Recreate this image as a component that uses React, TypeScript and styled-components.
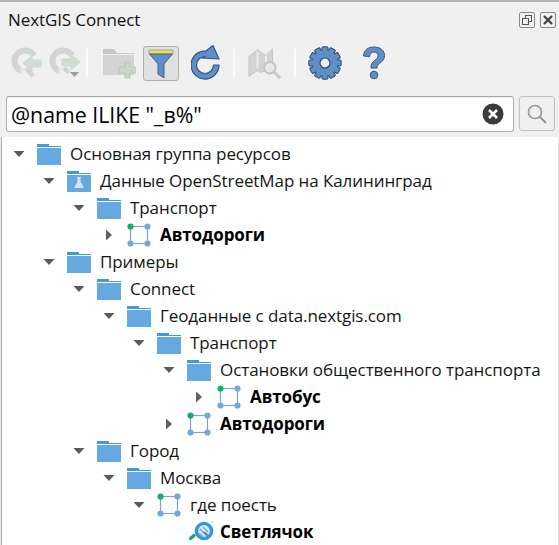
import { FC } from 'react'
import styled, { createGlobalStyle } from 'styled-components'

const GlobalStyle = createGlobalStyle`
  html, body { margin: 0; padding: 0; background: #f0f0f0; }
  body { font-family: "Open Sans", "Noto Sans", sans-serif; color: #000; }
`

const Panel = styled.div`
  width: 559px;
  height: 545px;
  overflow: hidden;
  display: flex;
  flex-direction: column;
  background: #f0f0f0;
  border-top: 2px solid #b4b4b4;
  box-sizing: border-box;
`

const TitleBar = styled.div`
  height: 36px;
  flex: none;
  display: flex;
  align-items: center;
  padding: 0 3px 0 8px;
  box-sizing: border-box;
`

const Title = styled.span`
  flex: 1;
  margin-bottom: 2px;
  font-size: 17px;
  letter-spacing: -0.1px;
  color: #101010;
`

const WindowButton = styled.button`
  width: 16px;
  height: 16px;
  margin-left: 5px;
  padding: 0;
  border: 1px solid #8a8a8a;
  border-radius: 2px;
  background: #f0f0f0;
  display: flex;
  align-items: center;
  justify-content: center;
`

const Toolbar = styled.div`
  height: 42px;
  flex: none;
  margin-top: 4px;
  padding-left: 8px;
  display: flex;
  align-items: center;
`

const ToolButton = styled.button<{ $w?: number; $gap?: number; $active?: boolean }>`
  width: ${(p) => p.$w ?? 36}px;
  height: 35px;
  margin-left: ${(p) => p.$gap ?? 0}px;
  padding: 0;
  flex: none;
  display: flex;
  align-items: center;
  justify-content: center;
  border-radius: 3px;
  box-sizing: border-box;
  border: 1px solid ${(p) => (p.$active ? '#adadad' : 'transparent')};
  background: ${(p) => (p.$active ? '#e0e0e0' : 'transparent')};
`

const ToolSep = styled.div<{ $before: number; $after: number }>`
  width: 2px;
  height: 28px;
  flex: none;
  margin: 0 ${(p) => p.$after}px 0 ${(p) => p.$before}px;
  background: #fbfbfb;
`

const SearchRow = styled.div`
  flex: none;
  margin-top: 12px;
  padding: 0 4px 0 6px;
  display: flex;
  gap: 5px;
`

const SearchBox = styled.div`
  flex: 1;
  height: 36px;
  box-sizing: border-box;
  display: flex;
  align-items: center;
  padding: 0 9px 0 4px;
  background: #fff;
  border: 1px solid #b0b0b0;
  border-top-color: #a8a8a8;
  border-radius: 3px;
  box-shadow: inset 0 1px 0 #ececec;
`

const SearchText = styled.span`
  flex: 1;
  font-size: 21.3px;
  white-space: pre;
`

const SearchButton = styled.button`
  width: 36px;
  height: 35px;
  padding: 0;
  box-sizing: border-box;
  border: 1px solid #c0c0c0;
  border-radius: 3px;
  background: #f0f0f0;
  display: flex;
  align-items: center;
  justify-content: center;
`

const Tree = styled.div`
  flex: 1;
  margin: 5px 0 0 1px;
  padding-top: 3px;
  background: #fff;
  border-left: 1px solid #a8a8a8;
  border-right: 1px solid #e4e4e4;
`

const Row = styled.div<{ $level: number }>`
  height: 27px;
  display: flex;
  align-items: center;
  padding-left: ${(p) => 9 + p.$level * 30}px;
  white-space: nowrap;
`

const Arrow = styled.span`
  width: 16px;
  height: 16px;
  flex: none;
  margin-right: 10px;
  display: flex;
  align-items: center;
  justify-content: center;
`

const ItemIcon = styled.span`
  width: 24px;
  height: 24px;
  flex: none;
  margin-right: 9px;
  display: block;
`

const Label = styled.span<{ $bold?: boolean }>`
  font-size: 17px;
  letter-spacing: -0.08px;
  font-weight: ${(p) => (p.$bold ? 700 : 400)};
  color: ${(p) => (p.$bold ? '#000' : '#151515')};
`

const ArrowIcon: FC<{ open: boolean }> = ({ open }) => (
  <svg width="16" height="16" viewBox="0 0 16 16">
    {open ? <path d="M2.5 5h11L8 11z" fill="#5a5a5a" /> : <path d="M5 2.5v11L11 8z" fill="#5f5f5f" />}
  </svg>
)

const Folder: FC = () => (
  <svg width="24" height="24" viewBox="0 0 24 24">
    <path d="M0 2h12v2h12v1H0z" fill="#3f9ade" />
    <rect x="0" y="6" width="24" height="17" fill="#66a9e0" />
  </svg>
)

const DataFolder: FC = () => (
  <svg width="24" height="24" viewBox="0 0 24 24">
    <path d="M0 2h12v2h12v1H0z" fill="#3f9ade" />
    <rect x="0" y="6" width="24" height="17" fill="#66a9e0" />
    <path d="M10 8h4v1h-.5v3.5L17 19H7l3.5-6.5V9H10z" fill="#d3e5f5" />
  </svg>
)

const Layer: FC = () => (
  <svg width="24" height="24" viewBox="0 0 24 24">
    <rect x="3.5" y="3.5" width="17" height="17" fill="none" stroke="#78a6d9" strokeWidth="1.2" />
    <circle cx="20.5" cy="3.5" r="3.1" fill="#78a6d9" />
    <circle cx="3.5" cy="20.5" r="3.1" fill="#78a6d9" />
    <circle cx="20.5" cy="20.5" r="3.1" fill="#78a6d9" />
    <circle cx="3.5" cy="3.5" r="3.1" fill="#10b068" />
  </svg>
)

const LensLayer: FC = () => (
  <svg width="28" height="26" viewBox="0 0 28 26">
    <circle cx="17" cy="11" r="7.6" fill="#d6e8f7" stroke="#3a94d8" strokeWidth="3.4" />
    <path d="M13 9l6 6M16 7l5 5M12 13l4 4" stroke="#6fa8d8" strokeWidth="1.3" />
    <path d="M17 12l5 5" stroke="#4a8fc8" strokeWidth="2.2" />
    <path d="M7 15.500l-3.500 3" stroke="#10a860" strokeWidth="3.200" strokeLinecap="round" />
    <circle cx="25.500" cy="2" r="1" fill="#a8cbe8" />
  </svg>
)

const NavBack: FC = () => (
  <svg width="34" height="32" viewBox="0 0 34 32">
    <path d="M25 8.5A10.5 10.5 0 1 0 13 24" fill="none" stroke="#d2d3d3" strokeWidth="6" />
    <path d="M17 21l7 8" stroke="#d2d3d3" strokeWidth="4.5" />
    <path d="M14 16l9-7v4h9v7h-9v4z" fill="#cfdfcf" stroke="#d2d6d2" />
    <path d="M11 21h6v2h-4v4h-2z" fill="#e2e2e2" />
  </svg>
)

const NavForward: FC = () => (
  <svg width="34" height="32" viewBox="0 0 34 32">
    <path d="M25 8.5A10.5 10.5 0 1 0 13 24" fill="none" stroke="#d2d3d3" strokeWidth="6" />
    <path d="M17 21l5 5" stroke="#d2d3d3" strokeWidth="4.5" />
    <path d="M33 15l-9-7v4h-9v7h9v4z" fill="#cfdfcf" stroke="#d2d6d2" />
    <path d="M11 21h6v2h-4v4h-2z" fill="#e2e2e2" />
    <path d="M23 25h9l-4.5 5z" fill="#9d9d9d" />
  </svg>
)

const FolderAdd: FC = () => (
  <svg width="34" height="32" viewBox="0 0 34 32">
    <path d="M1 2h11l3 4h17v6H1z" fill="#c8c8c8" />
    <path d="M1 7h31v21H1z" fill="#d3d3d3" />
    <path d="M1 7h31v1H1z" fill="#f0f0f0" />
    <path d="M23 18h5v5h6v6h-6v5h-5v-5h-6v-6h6z" transform="translate(0 -3)" fill="#c9d6c9" stroke="#b9bdb9" strokeWidth="0.8" />
  </svg>
)

const Funnel: FC = () => (
  <svg width="26" height="29" viewBox="0 0 26 29">
    <path d="M1 1h24v4H1z" fill="#f4e04e" stroke="#8f9aa8" strokeWidth="0.8" />
    <path d="M1.5 5h23L16 15v14l-6-4V15z" fill="#5f8fc6" stroke="#47648c" strokeWidth="1" />
  </svg>
)

const Refresh: FC = () => (
  <svg width="30" height="36" viewBox="0 0 30 36">
    <path
      d="M28 20A14 14 0 1 1 12 6.200L15 6 22 0.500 28 14 11 13 14 11.500A8.500 8.500 0 1 0 22.500 20z"
      fill="#5f8fc6"
      stroke="#34557f"
      strokeWidth="1.2"
      strokeLinejoin="round"
    />
  </svg>
)

const MapSearch: FC = () => (
  <svg width="36" height="34" viewBox="0 0 36 34">
    <path d="M1 10l9-7 9 6 7-7v15l-7 8-6 2-3-2-9 6z" fill="#d3d3d3" stroke="#c4c4c4" />
    <path d="M10 5v18M19 9v9" stroke="#ececec" strokeWidth="2" />
    <circle cx="23" cy="22" r="6" fill="#e9e9e9" stroke="#c6c6c6" strokeWidth="2.4" />
    <path d="M27 26l7 7" stroke="#cbcbcb" strokeWidth="3.4" />
  </svg>
)

const Gear: FC = () => {
  const teeth = Array.from({ length: 12 }, (_, i) => i * 30)
  return (
    <svg width="34" height="34" viewBox="0 0 34 34">
      {teeth.map((a) => (
        <rect key={a} x="14" y="0.8" width="6" height="8" rx="1" fill="#5f8fc6" stroke="#2f4a70" strokeWidth="1" transform={`rotate(${a} 17 17)`} />
      ))}
      <circle cx="17" cy="17" r="12.5" fill="#5f8fc6" />
      <circle cx="17" cy="17" r="5" fill="#f0f0f0" stroke="#2f4a70" strokeWidth="1.2" />
    </svg>
  )
}

const Help: FC = () => (
  <svg width="24" height="34" viewBox="0 0 24 34">
    <path d="M1.5 10C2 4 6 1 12 1c6.500 0 10.500 3.500 10.500 8.500 0 4-2.500 6-5 8-2 1.500-2.500 2.500-2.500 4.500H9c0-3.500 1-5.500 3.500-7.500 2-1.500 3.500-2.500 3.500-5 0-2-1.500-3.500-4-3.500-2.500 0-4 1.500-4.500 4.500z" fill="#5f8fc6" stroke="#34557f" strokeWidth="1" />
    <circle cx="12" cy="29" r="3.800" fill="#5f8fc6" stroke="#34557f" strokeWidth="1" />
  </svg>
)

type Item = { level: number; open?: boolean; icon: 'folder' | 'data' | 'layer' | 'lens'; text: string; bold?: boolean }

const items: Item[] = [
  { level: 0, open: true, icon: 'folder', text: 'Основная группа ресурсов' },
  { level: 1, open: true, icon: 'data', text: 'Данные OpenStreetMap на Калининград' },
  { level: 2, open: true, icon: 'folder', text: 'Транспорт' },
  { level: 3, open: false, icon: 'layer', text: 'Автодороги', bold: true },
  { level: 1, open: true, icon: 'folder', text: 'Примеры' },
  { level: 2, open: true, icon: 'folder', text: 'Connect' },
  { level: 3, open: true, icon: 'folder', text: 'Геоданные с data.nextgis.com' },
  { level: 4, open: true, icon: 'folder', text: 'Транспорт' },
  { level: 5, open: true, icon: 'folder', text: 'Остановки общественного транспорта' },
  { level: 6, open: false, icon: 'layer', text: 'Автобус', bold: true },
  { level: 5, open: false, icon: 'layer', text: 'Автодороги', bold: true },
  { level: 2, open: true, icon: 'folder', text: 'Город' },
  { level: 3, open: true, icon: 'folder', text: 'Москва' },
  { level: 4, open: true, icon: 'layer', text: 'где поесть' },
  { level: 5, icon: 'lens', text: 'Светлячок', bold: true },
]

const iconFor = (icon: Item['icon']) => {
  if (icon === 'folder') return <Folder />
  if (icon === 'data') return <DataFolder />
  if (icon === 'layer') return <Layer />
  return <LensLayer />
}

const App: FC = () => {
  return (
    <Panel>
      <GlobalStyle />

      <TitleBar>
        <Title>NextGIS Connect</Title>
        <WindowButton>
          <svg width="12" height="12" viewBox="0 0 12 12">
            <rect x="4.5" y="1.500" width="6" height="6" fill="none" stroke="#555" />
            <rect x="1.500" y="4.500" width="6" height="6" fill="#f0f0f0" stroke="#555" />
          </svg>
        </WindowButton>
        <WindowButton>
          <svg width="12" height="12" viewBox="0 0 12 12">
            <path d="M2 2l8 8M10 2l-8 8" stroke="#444" strokeWidth="2.4" />
          </svg>
        </WindowButton>
      </TitleBar>

      <Toolbar>
        <ToolButton><NavBack /></ToolButton>
        <ToolButton $gap={2}><NavForward /></ToolButton>
        <ToolSep $before={4} $after={13} />
        <ToolButton><FolderAdd /></ToolButton>
        <ToolButton $gap={6} $active><Funnel /></ToolButton>
        <ToolButton $gap={9}><Refresh /></ToolButton>
        <ToolSep $before={9} $after={12} />
        <ToolButton><MapSearch /></ToolButton>
        <ToolSep $before={11} $after={11} />
        <ToolButton><Gear /></ToolButton>
        <ToolButton $gap={13}><Help /></ToolButton>
      </Toolbar>

      <SearchRow>
        <SearchBox>
          <SearchText>@name ILIKE "_в%"</SearchText>
          <svg width="22" height="22" viewBox="0 0 22 22">
            <circle cx="11" cy="11" r="10.500" fill="#3b3b3b" />
            <path d="M7 7l8 8M15 7l-8 8" stroke="#fff" strokeWidth="2.600" />
          </svg>
        </SearchBox>
        <SearchButton>
          <svg width="24" height="24" viewBox="0 0 24 24">
            <circle cx="10" cy="10" r="6.500" fill="none" stroke="#9a9a9a" strokeWidth="1.700" />
            <path d="M15 15l6 6" stroke="#969696" strokeWidth="2.200" />
          </svg>
        </SearchButton>
      </SearchRow>

      <Tree>
        {items.map((item, index) => (
          <Row key={index} $level={item.level}>
            <Arrow>{item.open !== undefined && <ArrowIcon open={item.open} />}</Arrow>
            <ItemIcon>{iconFor(item.icon)}</ItemIcon>
            <Label $bold={item.bold}>{item.text}</Label>
          </Row>
        ))}
      </Tree>
    </Panel>
  )
}

export default App
